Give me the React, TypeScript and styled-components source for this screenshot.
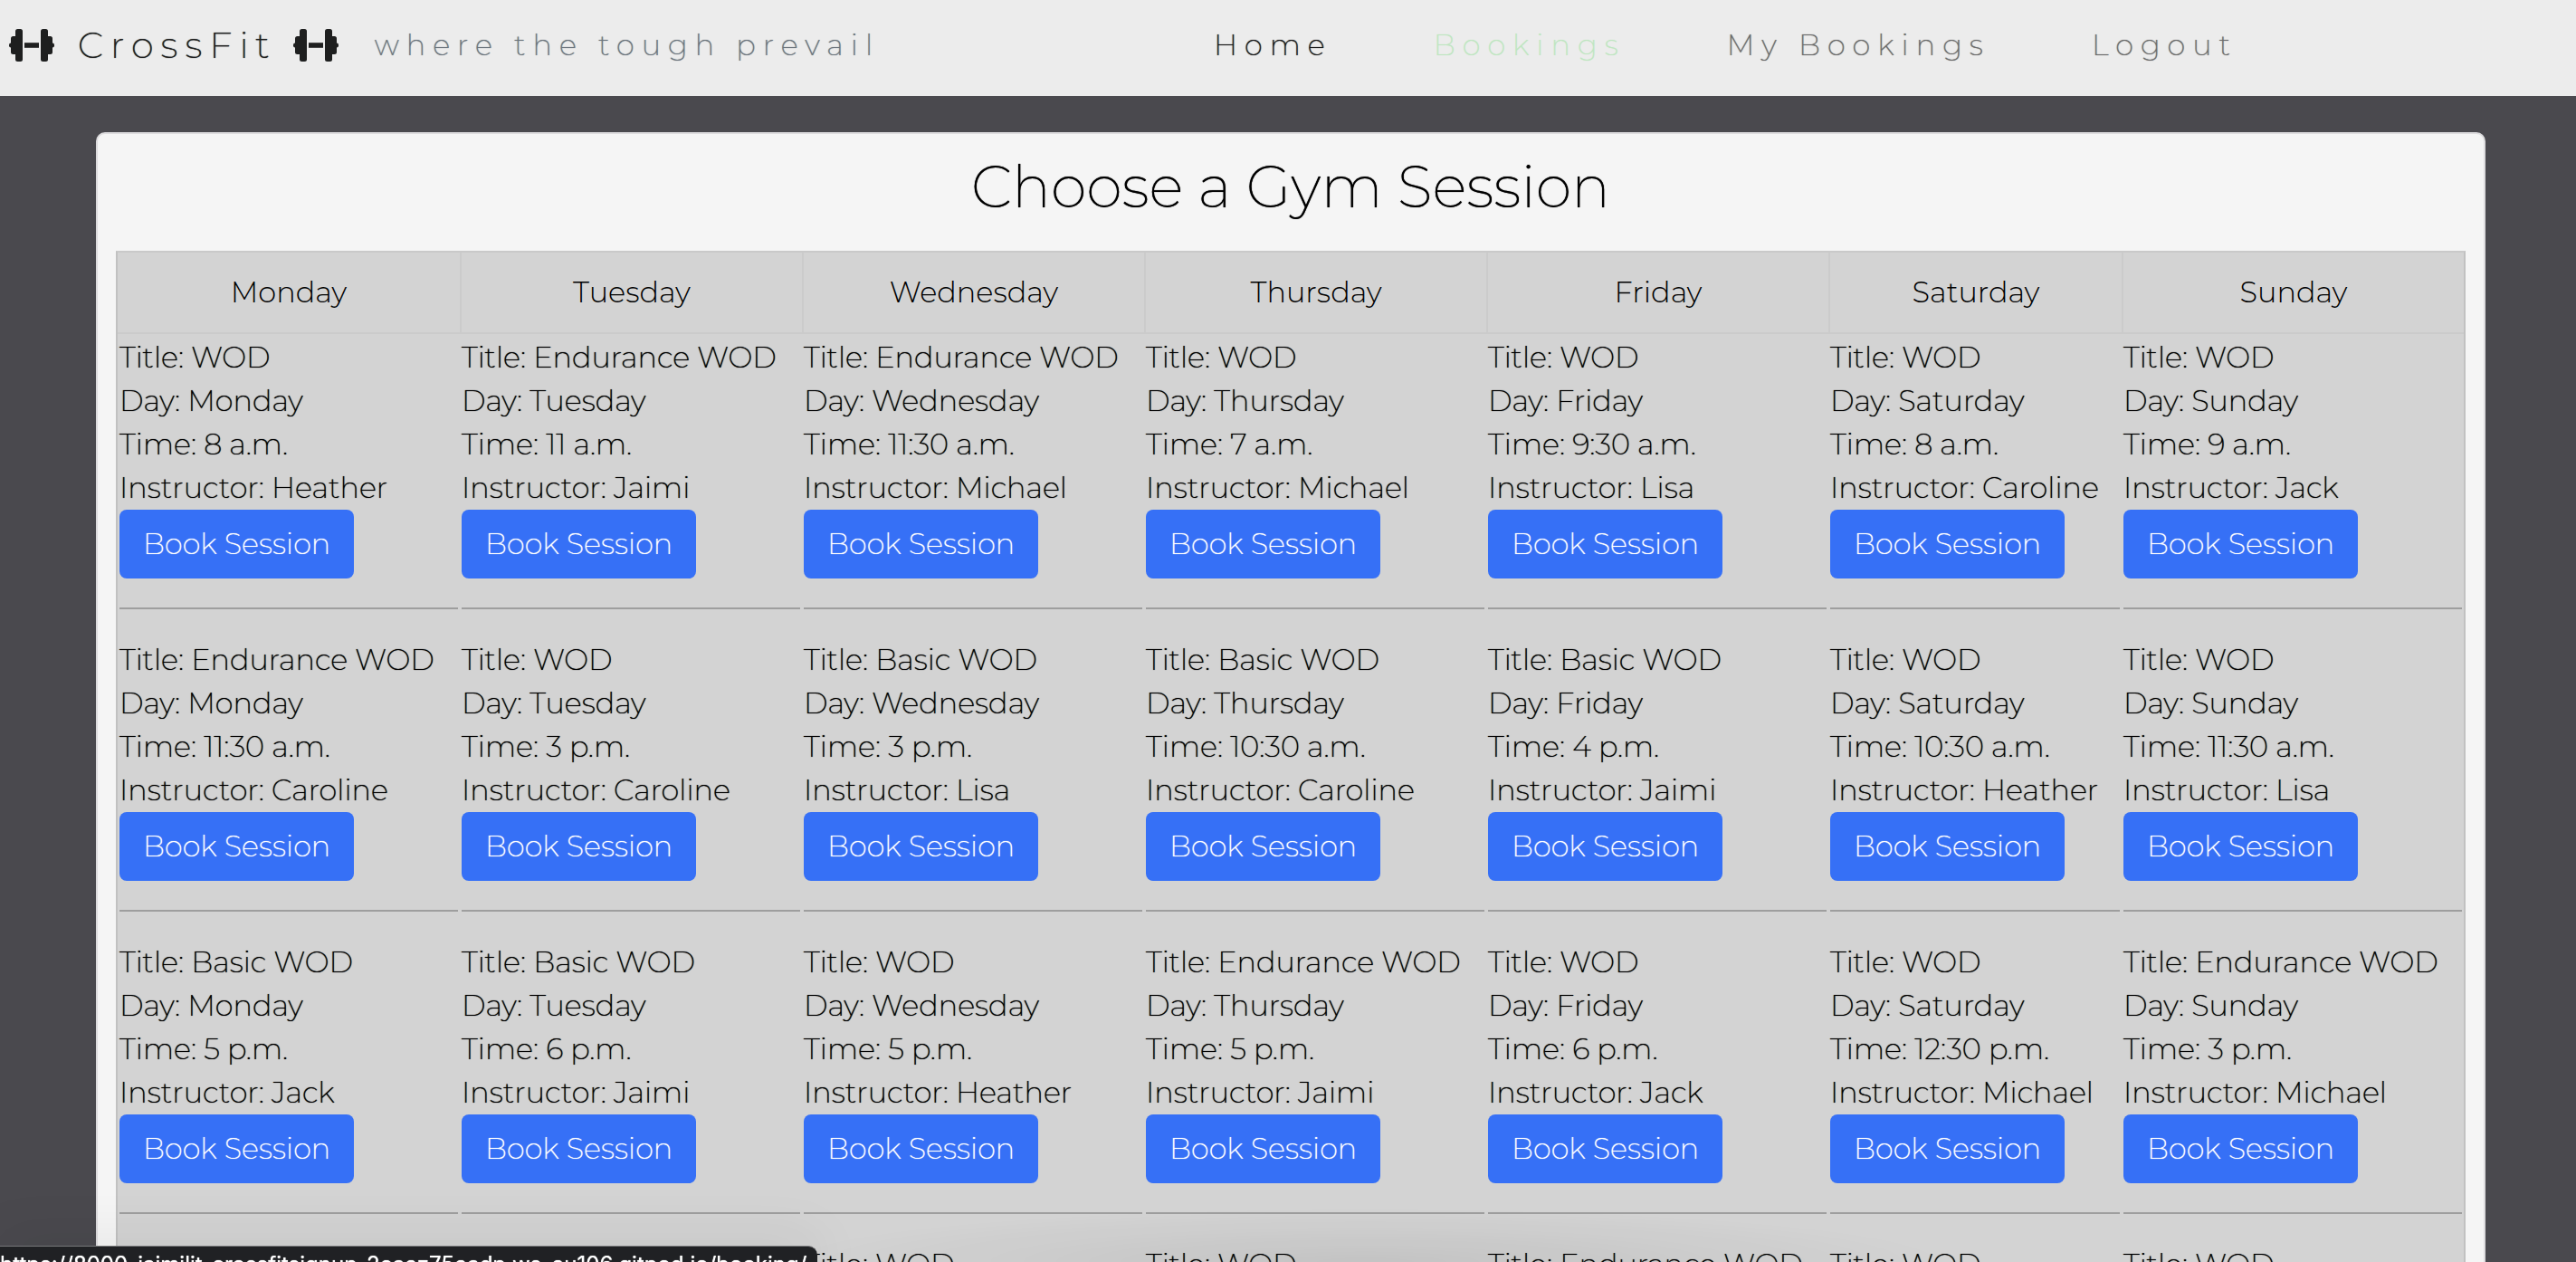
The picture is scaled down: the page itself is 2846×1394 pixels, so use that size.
import React from 'react';
import styled, { createGlobalStyle } from 'styled-components';

const GlobalStyle = createGlobalStyle`
  *, *::before, *::after { box-sizing: border-box; }
  body {
    margin: 0;
    background: #4a494e;
    color: #000;
    font-family: Montserrat, Inter, "Open Sans", sans-serif;
    font-size: 32px;
    font-weight: 200;
    line-height: 48px;
    text-shadow: 0 0 1px currentColor;
  }
`;

const Page = styled.div`
  height: 100vh;
  overflow: hidden;
`;

const Navbar = styled.header`
  display: grid;
  grid-template-columns: 471fr 529fr;
  align-items: center;
  height: 106px;
  padding: 0 10px 6px;
  background: #ececec;
  letter-spacing: 8px;
  white-space: nowrap;
`;

const BrandArea = styled.div`
  display: flex;
  align-items: center;
  gap: 40px;
`;

const Brand = styled.a`
  display: flex;
  align-items: center;
  gap: 18px;
  color: #1e1f1f;
  font-size: 40px;
  text-decoration: none;
`;

const BrandName = styled.span`
  padding-left: 8px;
`;

const Tagline = styled.span`
  color: #6c757d;
`;

const NavLinks = styled.nav`
  display: flex;
  gap: 112px;
`;

const NavLink = styled.a<{ $color: string }>`
  color: ${(p) => p.$color};
  text-decoration: none;
`;

const Main = styled.main`
  padding: 40px 100px 0 106px;
`;

const Card = styled.section`
  padding: 20px;
  border: 2px solid #dddcde;
  border-radius: 10px;
  background: #f5f5f5;
`;

const Heading = styled.h1`
  margin: 0;
  padding-bottom: 32px;
  font-size: 64px;
  font-weight: 200;
  line-height: 77px;
  text-align: center;
`;

const Schedule = styled.table`
  width: 100%;
  table-layout: fixed;
  border: 2px solid #c1c1c1;
  border-top-color: #c9c9c9;
  border-spacing: 0;
  background: #d3d3d3;
`;

const Column = styled.col<{ $share: number }>`
  width: ${(p) => (p.$share / 48) * 100}%;
`;

const DayHeader = styled.th`
  padding: 20px 0;
  border-left: 2px solid #cbcbcb;
  border-bottom: 2px solid #cbcbcb;
  font-weight: 300;
  text-shadow: none;

  &:first-child { border-left: 0; }
`;

const DayCell = styled.td`
  padding: 2px;
  vertical-align: top;
  white-space: nowrap;
`;

const BookButton = styled.button`
  display: block;
  height: 76px;
  padding: 0 26px;
  border: 0;
  border-radius: 8px;
  background: #3670f6;
  color: #fff;
  font: inherit;
  text-shadow: 0 0 1px currentColor;
`;

const Divider = styled.hr`
  height: 2px;
  margin: 32px 0;
  border: 0;
  background: #9e9e9e;
`;

const StatusBar = styled.div`
  position: fixed;
  bottom: 0;
  left: 0;
  height: 18px;
  padding: 6px 12px 0 0;
  border-top: 1px solid #77787a;
  border-radius: 0 10px 0 0;
  background: #202124;
  box-shadow: 0 0 60px rgba(0, 0, 0, 0.15);
  color: #fff;
  font-family: Inter, sans-serif;
  font-size: 24px;
  font-weight: 400;
  line-height: 28px;
  white-space: nowrap;
`;

const BottomShade = styled.div`
  position: fixed;
  right: 24%;
  bottom: 0;
  left: 30%;
  height: 60px;
  background: radial-gradient(ellipse at bottom, rgba(0, 0, 0, 0.07), transparent 70%);
  pointer-events: none;
`;

const Dumbbell = () => (
  <svg width="50" height="36" viewBox="0 0 50 36" fill="#1e1f1f" aria-hidden="true">
    <rect x="0" y="15.5" width="6" height="5" rx="2" />
    <rect x="2" y="8" width="9" height="20" rx="2.5" />
    <rect x="7" y="0" width="8" height="36" rx="2.5" />
    <rect x="17" y="15.2" width="16" height="5.6" />
    <rect x="35" y="0" width="8" height="36" rx="2.5" />
    <rect x="39" y="8" width="9" height="20" rx="2.5" />
    <rect x="44" y="15.5" width="6" height="5" rx="2" />
  </svg>
);

interface Session {
  title: string;
  time?: string;
  instructor?: string;
}

interface Day {
  name: string;
  share: number;
  sessions: Session[];
}

const W = 'WOD';
const E = 'Endurance WOD';
const B = 'Basic WOD';

const session = (title: string, time?: string, instructor?: string): Session => ({ title, time, instructor });

const days: Day[] = [
  { name: 'Monday', share: 7, sessions: [session(W, '8 a.m.', 'Heather'), session(E, '11:30 a.m.', 'Caroline'), session(B, '5 p.m.', 'Jack')] },
  { name: 'Tuesday', share: 7, sessions: [session(E, '11 a.m.', 'Jaimi'), session(W, '3 p.m.', 'Caroline'), session(B, '6 p.m.', 'Jaimi')] },
  { name: 'Wednesday', share: 7, sessions: [session(E, '11:30 a.m.', 'Michael'), session(B, '3 p.m.', 'Lisa'), session(W, '5 p.m.', 'Heather'), session(W)] },
  { name: 'Thursday', share: 7, sessions: [session(W, '7 a.m.', 'Michael'), session(B, '10:30 a.m.', 'Caroline'), session(E, '5 p.m.', 'Jaimi'), session(W)] },
  { name: 'Friday', share: 7, sessions: [session(W, '9:30 a.m.', 'Lisa'), session(B, '4 p.m.', 'Jaimi'), session(W, '6 p.m.', 'Jack'), session(E)] },
  { name: 'Saturday', share: 6, sessions: [session(W, '8 a.m.', 'Caroline'), session(W, '10:30 a.m.', 'Heather'), session(W, '12:30 p.m.', 'Michael'), session(W)] },
  { name: 'Sunday', share: 7, sessions: [session(W, '9 a.m.', 'Jack'), session(W, '11:30 a.m.', 'Lisa'), session(E, '3 p.m.', 'Michael'), session(W)] },
];

const links = [
  { label: 'Home', color: '#1a1a1a' },
  { label: 'Bookings', color: '#bfe6c1' },
  { label: 'My Bookings', color: '#6c6c6c' },
  { label: 'Logout', color: '#6c6c6c' },
];

const SessionEntry = ({ day, item }: { day: string; item: Session }) => (
  <div>
    <div>Title: {item.title}</div>
    {item.time && (
      <>
        <div>Day: {day}</div>
        <div>Time: {item.time}</div>
        <div>Instructor: {item.instructor}</div>
        <BookButton type="button">Book Session</BookButton>
        <Divider />
      </>
    )}
  </div>
);

export default function App() {
  return (
    <Page>
      <GlobalStyle />
      <Navbar>
        <BrandArea>
          <Brand href="#">
            <Dumbbell />
            <BrandName>CrossFit</BrandName>
            <Dumbbell />
          </Brand>
          <Tagline>where the tough prevail</Tagline>
        </BrandArea>
        <NavLinks>
          {links.map((l) => (
            <NavLink key={l.label} href="#" $color={l.color}>{l.label}</NavLink>
          ))}
        </NavLinks>
      </Navbar>
      <Main>
        <Card>
          <Heading>Choose a Gym Session</Heading>
          <Schedule>
            <colgroup>
              {days.map((d) => <Column key={d.name} $share={d.share} />)}
            </colgroup>
            <thead>
              <tr>{days.map((d) => <DayHeader key={d.name} scope="col">{d.name}</DayHeader>)}</tr>
            </thead>
            <tbody>
              <tr>
                {days.map((d) => (
                  <DayCell key={d.name}>
                    {d.sessions.map((s, i) => <SessionEntry key={i} day={d.name} item={s} />)}
                  </DayCell>
                ))}
              </tr>
            </tbody>
          </Schedule>
        </Card>
      </Main>
      <BottomShade />
      <StatusBar>https://8000-jaimilit-crossfitsignup-2caez75eadp.ws-eu106.gitpod.io/booking/</StatusBar>
    </Page>
  );
}
